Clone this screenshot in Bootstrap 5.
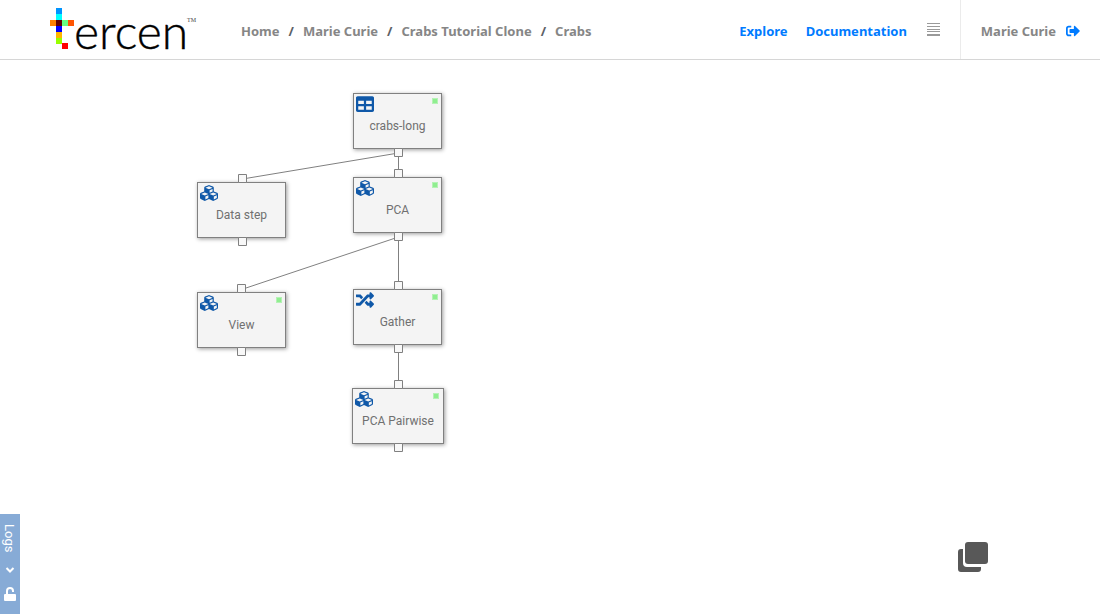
<!DOCTYPE html>
<html lang="en">
<head>
<meta charset="utf-8">
<meta name="viewport" content="width=device-width, initial-scale=1">
<title>Crabs - Tercen</title>
<link href="https://cdn.jsdelivr.net/npm/bootstrap@5.3.0/dist/css/bootstrap.min.css" rel="stylesheet">
<style>
body { font-family: Roboto, sans-serif; font-size: 12px; }
.topbar { height: 60px; border-bottom: 1px solid #d6d6d6; font: 700 13px/20px "Noto Sans", sans-serif; }
.topbar a { text-decoration: none; }
.topbar nav, .account { padding-top: 3px; }
.crumbs { --bs-breadcrumb-item-padding-x: 9px; --bs-breadcrumb-divider-color: #5c6166; margin-left: 44px; font-size: 13px; }
.crumbs a, .account { color: #868686; }
.links { gap: 18px; }
.links a { color: #007bff; }
.account { border-left: 1px solid #ebebeb; padding-left: 20px; padding-right: 20px; gap: 10px; }
.menu-btn { color: #9a9a9a; margin-left: 2px; margin-right: 20px; }
.brand-logo { margin-left: 50px; }
.step { position: absolute; width: 89px; height: 56px; background: #f4f4f4; border: 1px solid #808080; box-shadow: 1px 1px 4px rgba(0,0,0,.4); color: #707070; font-size: 12px; line-height: 16px; padding-top: 9px; }
.step-wide { width: 92px; }
.step-icon { position: absolute; left: 2px; top: 1px; width: 18px; height: 18px; fill: #0f58a8; }
.state { position: absolute; right: 3px; top: 4px; width: 6px; height: 6px; background: #90ee90; border: 1px solid #b5f2b5; }
.step-wide .state { right: 4px; }
.wires { position: absolute; left: 0; top: 0; width: 460px; height: 420px; }
.logs { position: absolute; left: 0; bottom: 0; width: 20px; height: 100px; background: #87abd6; color: #fff; padding: 10px 0 13px; }
.logs-label { writing-mode: vertical-rl; font-size: 13px; line-height: 20px; margin-right: 2px; }
.copies { position: absolute; right: 112px; bottom: 42px; color: #585858; }
</style>
</head>
<body class="d-flex flex-column vh-100">
<header class="topbar d-flex flex-shrink-0 align-items-stretch">
  <a class="brand-logo" href="#" aria-label="tercen">
    <svg class="d-block" width="147" height="59" viewBox="0 0 147 59">
      <g shape-rendering="crispEdges">
        <path fill="#0094ff" d="M6 8h6v6H6z"/><path fill="#00ffff" d="M6 14h6v6H6z"/>
        <path fill="#ff8000" d="M0 20h6v6H0z"/><path fill="#640000" d="M6 20h6v6H6z"/>
        <path fill="#68ff80" d="M12 20h6v6h-6z"/><path fill="#ff5500" d="M18 20h6v6h-6z"/>
        <path fill="#0000ff" d="M6 26h6v6H6z"/><path fill="#ffb600" d="M6 32h6v6H6z"/>
        <path fill="#98ff00" d="M6 38h6v6H6z"/><path fill="#f00" d="M12 43h6v6h-6z"/>
      </g>
      <text x="24" y="49" font-family="Lato, sans-serif" font-weight="300" font-size="48" stroke="#000" stroke-width=".4">ercen</text>
      <text x="137" y="22" font-family="Liberation Serif, serif" font-weight="400" font-size="6" fill="#444">TM</text>
    </svg>
  </a>
  <nav class="d-flex align-items-center flex-grow-1" aria-label="breadcrumb">
    <ol class="breadcrumb crumbs mb-0">
      <li class="breadcrumb-item"><a href="#">Home</a></li>
      <li class="breadcrumb-item"><a href="#">Marie Curie</a></li>
      <li class="breadcrumb-item"><a href="#">Crabs Tutorial Clone</a></li>
      <li class="breadcrumb-item"><a href="#">Crabs</a></li>
    </ol>
  </nav>
  <nav class="links d-flex align-items-center" aria-label="Site">
    <a href="#">Explore</a>
    <a href="#">Documentation</a>
    <button type="button" class="menu-btn btn p-0 border-0 d-flex" aria-label="Menu">
      <svg width="13" height="16" viewBox="0 0 13 16"><path fill="currentColor" d="M0 0h13v1H0zM0 3h13v1H0zM0 6h13v1H0zM0 8h13v1H0zM0 11h13v2H0z"/></svg>
    </button>
  </nav>
  <div class="account d-flex align-items-center">
    <span>Marie Curie</span>
    <a class="d-flex" href="#" aria-label="Sign out"><svg width="14" height="14" viewBox="0 0 512 512" fill="#007bff"><path d="M497 273L329 441c-15 15-41 4.500-41-17v-96H152c-13.300 0-24-10.700-24-24v-96c0-13.300 10.700-24 24-24h136V88c0-21.400 25.900-32 41-17l168 168c9.300 9.400 9.300 24.600 0 34zM192 436v-40c0-6.600-5.400-12-12-12H96c-17.700 0-32-14.300-32-32V160c0-17.700 14.300-32 32-32h84c6.600 0 12-5.400 12-12V76c0-6.600-5.400-12-12-12H96c-53 0-96 43-96 96v192c0 53 43 96 96 96h84c6.600 0 12-5.400 12-12z"/></svg></a>
  </div>
</header>

<main class="position-relative flex-grow-1 overflow-hidden">
  <svg class="d-none">
    <symbol id="cubes" viewBox="0 0 512 512"><path d="M488.600 250.200L392 214V105.500c0-15-9.300-28.400-23.400-33.700l-100-37.500c-8.100-3.100-17.100-3.100-25.300 0l-100 37.500c-14.100 5.300-23.400 18.700-23.400 33.700V214l-96.600 36.200C9.300 255.500 0 268.900 0 283.900V394c0 13.600 7.700 26.100 19.900 32.200l100 50c10.100 5.100 22.100 5.100 32.200 0l103.900-52 103.900 52c10.100 5.100 22.100 5.100 32.200 0l100-50c12.200-6.100 19.900-18.600 19.900-32.200V283.900c0-15-9.300-28.400-23.400-33.700zM358 214.800l-85 31.900v-68.200l85-37v73.300zM154 104.100l102-38.200 102 38.200v.6l-102 41.400-102-41.400v-.6zm84 291.100l-85 42.500v-79.100l85-38.800v75.400zm0-112l-102 41.400-102-41.400v-.6l102-38.200 102 38.200v.6zm240 112l-85 42.500v-79.100l85-38.800v75.400zm0-112l-102 41.400-102-41.400v-.6l102-38.200 102 38.200v.6z"/></symbol>
    <symbol id="grid-table" viewBox="0 0 512 512"><path d="M464 32H48C21.490 32 0 53.490 0 80v352c0 26.510 21.490 48 48 48h416c26.510 0 48-21.490 48-48V80c0-26.510-21.490-48-48-48zM224 416H64v-96h160v96zm0-160H64v-96h160v96zm224 160H288v-96h160v96zm0-160H288v-96h160v96z"/></symbol>
    <symbol id="shuffle" viewBox="0 0 512 512"><path d="M504.971 359.029c9.373 9.373 9.373 24.569 0 33.941l-80 79.984c-15.010 15.010-40.971 4.490-40.971-16.971V416h-58.785a12.004 12.004 0 0 1-8.773-3.812l-70.556-75.596 53.333-57.143L352 336h32v-39.981c0-21.438 25.943-31.998 40.971-16.971l80 79.981zM12 176h84l52.781 56.551 53.333-57.143-70.556-75.596A11.999 11.999 0 0 0 122.785 96H12c-6.627 0-12 5.373-12 12v56c0 6.627 5.373 12 12 12zm372 0v39.984c0 21.460 25.961 31.980 40.971 16.971l80-79.984c9.373-9.373 9.373-24.569 0-33.941l-80-79.981C409.943 24.021 384 34.582 384 56.019V96h-58.785a12.004 12.004 0 0 0-8.773 3.812L96 336H12c-6.627 0-12 5.373-12 12v56c0 6.627 5.373 12 12 12h110.785c3.326 0 6.503-1.381 8.773-3.812L352 176h32z"/></symbol>
  </svg>

  <div class="step d-flex align-items-center justify-content-center" style="left:353px;top:33px"><svg class="step-icon"><use href="#grid-table"/></svg><i class="state"></i>crabs-long</div>
  <div class="step d-flex align-items-center justify-content-center" style="left:197px;top:122px"><svg class="step-icon"><use href="#cubes"/></svg>Data step</div>
  <div class="step d-flex align-items-center justify-content-center" style="left:353px;top:117px"><svg class="step-icon"><use href="#cubes"/></svg><i class="state"></i>PCA</div>
  <div class="step d-flex align-items-center justify-content-center" style="left:197px;top:232px"><svg class="step-icon"><use href="#cubes"/></svg><i class="state"></i>View</div>
  <div class="step d-flex align-items-center justify-content-center" style="left:353px;top:229px"><svg class="step-icon"><use href="#shuffle"/></svg><i class="state"></i>Gather</div>
  <div class="step step-wide d-flex align-items-center justify-content-center" style="left:352px;top:328px"><svg class="step-icon"><use href="#cubes"/></svg><i class="state"></i>PCA Pairwise</div>

  <!-- connections, then the ports at their ends -->
  <svg class="wires" viewBox="0 0 460 420">
    <g stroke="#808080" fill="none">
      <path d="M398.500 93L242.500 119M398.500 93V113M398.500 177L241.500 229.500M398.500 177V225M398.500 289V324"/>
    </g>
    <g fill="#f8f8f8" stroke="#808080">
      <path d="M394.500 88.500h8v8h-8zM394.500 109.500h8v8h-8zM394.500 172.500h8v8h-8zM394.500 221.500h8v8h-8zM394.500 284.500h8v8h-8zM394.500 320.500h8v8h-8zM394.500 383.500h8v8h-8zM238.500 114.500h8v8h-8zM238.500 177.500h8v8h-8zM237.500 224.500h8v8h-8zM237.500 287.500h8v8h-8z"/>
    </g>
  </svg>

  <aside class="logs d-flex flex-column align-items-center justify-content-between">
    <span class="logs-label">Logs</span>
    <button type="button" class="btn p-0 border-0 d-flex text-white" aria-label="Expand logs"><svg width="10" height="8" viewBox="0 0 10 8"><path d="M1.500 2L5 5.500 8.500 2" fill="none" stroke="currentColor" stroke-width="2"/></svg></button>
    <button type="button" class="btn p-0 border-0 d-flex text-white" aria-label="Unlock"><svg width="14" height="14" viewBox="0 0 14 14"><path d="M4 7V4a3 3 0 0 1 6 0v1" fill="none" stroke="currentColor" stroke-width="2"/><rect x="1" y="7" width="12" height="7" rx="1" fill="currentColor"/></svg></button>
  </aside>

  <button type="button" class="copies btn p-0 border-0 d-flex" aria-label="Duplicate">
    <svg width="30" height="30" viewBox="0 0 30 30" fill="currentColor"><rect x="7" width="23" height="22" rx="3"/><path d="M5 7v14q0 4 4 4h14v2q0 3-3 3H3q-3 0-3-3V10q0-3 3-3z"/></svg>
  </button>
</main>
<script src="https://cdn.jsdelivr.net/npm/bootstrap@5.3.0/dist/js/bootstrap.bundle.min.js"></script>
</body>
</html>
